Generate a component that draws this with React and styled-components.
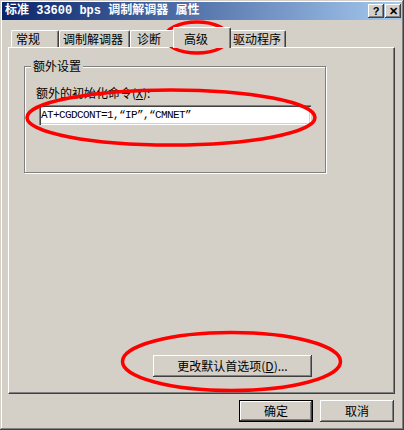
import React from 'react'
import styled, { createGlobalStyle } from 'styled-components'

const GlobalStyle = createGlobalStyle`
  html, body {
    margin: 0;
    padding: 0;
    background: #d4d0c8;
  }
  * {
    box-sizing: border-box;
  }
`

const Window = styled.div`
  position: relative;
  width: 404px;
  height: 430px;
  padding: 2px;
  background: #d4d0c8;
  display: flex;
  flex-direction: column;
  font-family: "Noto Sans CJK SC", "Liberation Sans", sans-serif;
  font-size: 12px;
  color: #000;
  box-shadow: inset -1px -1px #404040, inset 1px 1px #d4d0c8,
    inset -2px -2px #808080, inset 2px 2px #ffffff;
`

const TitleBar = styled.div`
  height: 18px;
  display: flex;
  align-items: center;
  padding-left: 3px;
  padding-right: 1px;
  background: linear-gradient(to right, #0a246a, #a6caf0);
`

const TitleText = styled.div`
  flex: 1;
  color: #fff;
  font-weight: bold;
  font-size: 12px;
  white-space: pre;
  font-family: "Liberation Mono", "Noto Sans CJK SC", monospace;
  line-height: 16px;
`

const CaptionButton = styled.div`
  width: 16px;
  height: 14px;
  margin-left: ${({ gap }) => gap || 0}px;
  background: #d4d0c8;
  display: flex;
  align-items: center;
  justify-content: center;
  box-shadow: inset -1px -1px #404040, inset 1px 1px #ffffff,
    inset -2px -2px #808080;
  font-family: "Liberation Sans", sans-serif;
  font-weight: bold;
  font-size: 11px;
  line-height: 14px;
`

const Body = styled.div`
  flex: 1;
  display: flex;
  flex-direction: column;
  padding: 7px 6px 0 6px;
`

const TabStrip = styled.div`
  display: flex;
  align-items: flex-end;
  height: 20px;
  padding-left: 3px;
  position: relative;
  z-index: 1;
`

const Tab = styled.div`
  width: ${({ w }) => w}px;
  height: ${({ active }) => (active ? 21 : 17)}px;
  margin: ${({ active }) => (active ? '0 -2px -1px -2px' : '0')};
  padding-left: ${({ pad }) => pad}px;
  padding-top: ${({ active }) => (active ? 1 : 0)}px;
  position: relative;
  z-index: ${({ active }) => (active ? 2 : 1)};
  display: flex;
  align-items: center;
  background: #d4d0c8;
  border-top: 1px solid #fff;
  border-left: 1px solid #fff;
  border-right: 1px solid #404040;
  border-radius: 2px 2px 0 0;
  box-shadow: inset -1px 0 #808080;
  line-height: 14px;
  white-space: nowrap;
`

const Panel = styled.div`
  height: 347px;
  margin-right: 1px;
  display: flex;
  flex-direction: column;
  border-top: 1px solid #fff;
  border-left: 1px solid #fff;
  border-right: 1px solid #404040;
  border-bottom: 1px solid #404040;
  box-shadow: inset -1px -1px #808080;
  padding: 18px 0 0 15px;
`

const GroupBox = styled.div`
  position: relative;
  width: 302px;
  height: 107px;
  border: 1px solid #808080;
  box-shadow: 1px 1px 0 #fff, inset 1px 1px 0 #fff;
  padding: 19px 0 0 11px;
`

const Legend = styled.span`
  position: absolute;
  top: -8px;
  left: 6px;
  padding: 0 2px;
  background: #d4d0c8;
  line-height: 14px;
`

const FieldLabel = styled.div`
  line-height: 14px;
  height: 14px;
  margin-bottom: 5px;
`

const TextBox = styled.div`
  width: 272px;
  height: 20px;
  margin-left: 3px;
  background: #fff;
  padding: 0 2px;
  display: flex;
  align-items: center;
  box-shadow: inset 1px 1px #808080, inset 2px 2px #404040,
    inset -1px -1px #ffffff, inset -2px -2px #d4d0c8;
  font-family: "Liberation Mono", "Noto Sans CJK SC", monospace;
  font-size: 11px;
  letter-spacing: -0.6px;
  white-space: pre;
`

const Button = styled.div`
  width: ${({ w }) => w}px;
  height: ${({ h }) => h || 22}px;
  background: #d4d0c8;
  display: flex;
  align-items: center;
  justify-content: center;
  line-height: 14px;
  border: ${({ isDefault }) => (isDefault ? '1px solid #000' : 'none')};
  box-shadow: inset -1px -1px #404040, inset 1px 1px #ffffff,
    inset -2px -2px #808080, inset 2px 2px #d4d0c8;
`

const PanelActions = styled.div`
  margin-top: auto;
  margin-left: 129px;
  margin-bottom: 16px;
`

const Footer = styled.div`
  display: flex;
  justify-content: flex-end;
  gap: 7px;
  padding: 6px 2px 0 0;
`

const Marks = styled.svg`
  position: absolute;
  left: 0;
  top: 0;
  pointer-events: none;
`

const tabs = [
  { label: '常规', w: 48, pad: 4 },
  { label: '调制解调器', w: 71, pad: 3 },
  { label: '诊断', w: 45, pad: 6 },
  { label: '高级', w: 58, pad: 10, active: true },
  { label: '驱动程序', w: 57, pad: 3 },
]

const marks = [
  { cx: 197, cy: 37.5, rx: 32, ry: 15.5 },
  { cx: 171, cy: 117.5, rx: 144, ry: 27.5 },
  { cx: 231.5, cy: 361.5, rx: 109, ry: 29 },
]

export default function App() {
  return (
    <>
      <GlobalStyle />
      <Window>
        <TitleBar>
          <TitleText>标准 33600 bps 调制解调器 属性</TitleText>
          <CaptionButton>?</CaptionButton>
          <CaptionButton gap={1}>✕</CaptionButton>
        </TitleBar>
        <Body>
          <TabStrip>
            {tabs.map((t) => (
              <Tab key={t.label} w={t.w} pad={t.pad} active={t.active}>
                {t.label}
              </Tab>
            ))}
          </TabStrip>
          <Panel>
            <GroupBox>
              <Legend>额外设置</Legend>
              <FieldLabel>
                额外的初始化命令(<u>X</u>):
              </FieldLabel>
              <TextBox>AT+CGDCONT=1,“IP”,“CMNET”</TextBox>
            </GroupBox>
            <PanelActions>
              <Button w={159}>
                更改默认首选项(<u>D</u>)...
              </Button>
            </PanelActions>
          </Panel>
          <Footer>
            <Button w={74} isDefault>
              确定
            </Button>
            <Button w={74}>取消</Button>
          </Footer>
        </Body>
        <Marks width="404" height="430">
          {marks.map((m, i) => (
            <ellipse
              key={i}
              cx={m.cx}
              cy={m.cy}
              rx={m.rx}
              ry={m.ry}
              fill="none"
              stroke="#ff0000"
              strokeWidth="3.5"
            />
          ))}
        </Marks>
      </Window>
    </>
  )
}
